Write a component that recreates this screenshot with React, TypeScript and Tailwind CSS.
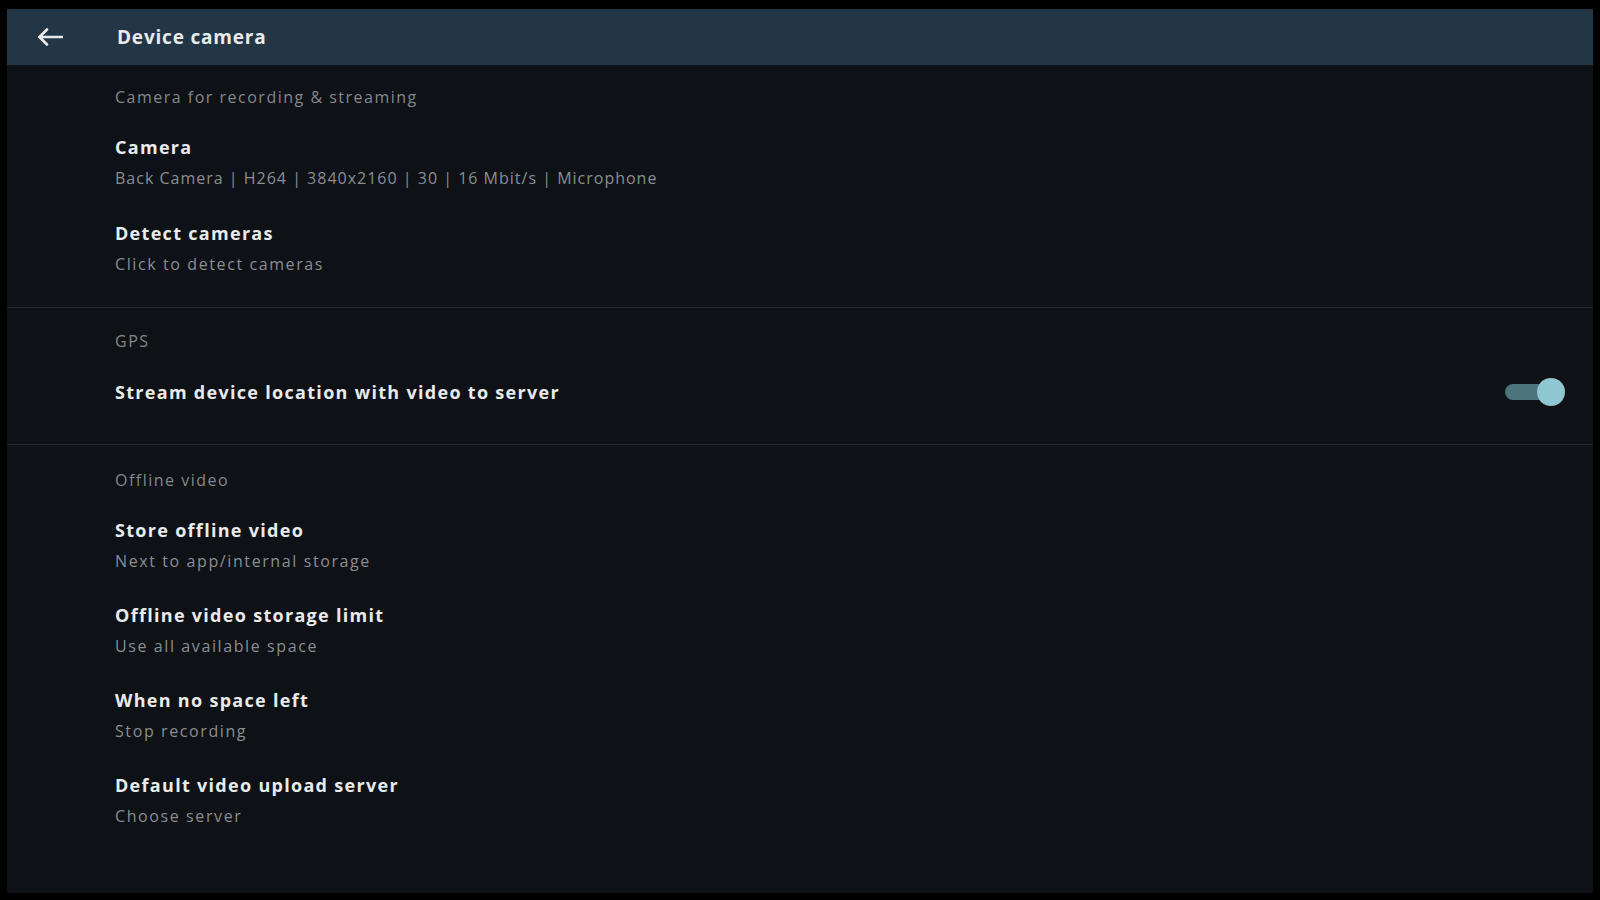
import React from "react";

function Item({ title, subtitle, subTrack }: { title: string; subtitle?: string; subTrack?: boolean }) {
  return (
    <div className="flex flex-col">
      <div className="text-[18px] leading-[24px] font-bold text-[#e8eaec] tracking-[1.3px]">{title}</div>
      {subtitle && (
        <div
          className={
            subTrack
              ? "mt-[8px] text-[16px] leading-[22px] text-[#8a8e93] tracking-[1px]"
              : "mt-[8px] text-[16px] leading-[22px] text-[#8a8e93] tracking-[1.6px]"
          }
        >
          {subtitle}
        </div>
      )}
    </div>
  );
}

function SectionHeader({ children }: { children: React.ReactNode }) {
  return <div className="text-[16px] leading-[22px] text-[#84888d] tracking-[1.5px]">{children}</div>;
}

export default function App() {
  return (
    <div
      className="w-[1600px] h-[900px] bg-black pt-[9px] pl-[7px] pr-[7px] pb-[7px] overflow-hidden"
      style={{ fontFamily: '"Open Sans", "Noto Sans", sans-serif' }}
    >
      <div className="w-full h-full bg-[#0e1115] flex flex-col">
        <div className="h-[56px] bg-[#233646] flex items-center shrink-0">
          <div className="w-[110px] flex items-center pl-[30px]">
            <svg width="26" height="18" viewBox="0 0 26 18" fill="none">
              <path d="M25 9H2.5" stroke="#e8eaed" strokeWidth="2.6" strokeLinecap="round" />
              <path d="M10 1.5L2.5 9L10 16.5" stroke="#e8eaed" strokeWidth="2.6" strokeLinecap="round" strokeLinejoin="round" />
            </svg>
          </div>
          <div className="text-[19px] font-bold text-[#e8eaec] tracking-[0.8px]">Device camera</div>
        </div>

        <div className="pl-[108px] pr-[28px] pt-[21px] pb-[32px]">
          <SectionHeader>Camera for recording &amp; streaming</SectionHeader>
          <div className="mt-[27px] flex flex-col gap-[32px]">
            <Item title="Camera" subtitle="Back Camera | H264 | 3840x2160 | 30 | 16 Mbit/s | Microphone" subTrack />
            <Item title="Detect cameras" subtitle="Click to detect cameras" />
          </div>
        </div>
        <div className="h-px bg-[#25282c]" />

        <div className="pl-[108px] pr-[28px] pt-[22px] pb-[40px]">
          <SectionHeader>GPS</SectionHeader>
          <div className="mt-[28px] flex items-center justify-between h-[24px]">
            <Item title="Stream device location with video to server" />
            <div className="relative w-[60px] h-[28px] flex items-center">
              <div className="w-[52px] h-[16px] rounded-full bg-[#4b747c]" />
              <div className="absolute right-0 top-0 w-[28px] h-[28px] rounded-full bg-[#8fc8d2]" />
            </div>
          </div>
        </div>
        <div className="h-px bg-[#25282c]" />

        <div className="pl-[108px] pr-[28px] pt-[24px]">
          <SectionHeader>Offline video</SectionHeader>
          <div className="mt-[27px] flex flex-col gap-[31px]">
            <Item title="Store offline video" subtitle="Next to app/internal storage" />
            <Item title="Offline video storage limit" subtitle="Use all available space" />
            <Item title="When no space left" subtitle="Stop recording" />
            <Item title="Default video upload server" subtitle="Choose server" />
          </div>
        </div>
      </div>
    </div>
  );
}
